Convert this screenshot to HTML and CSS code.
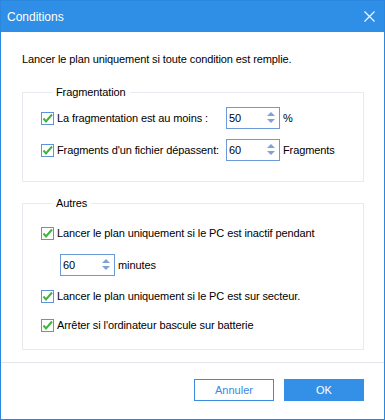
FILE: index.html
```html
<!DOCTYPE html>
<html lang="fr">
<head>
<meta charset="utf-8">
<title>Conditions</title>
<link rel="stylesheet" href="styles.css">
</head>
<body>
<div class="window">
  <div class="titlebar">
    <span class="title">Conditions</span>
    <svg class="close" width="11" height="11" viewBox="0 0 11 11"><path d="M0.5 0.5 L10.5 10.5 M10.5 0.5 L0.5 10.5" stroke="#fff" stroke-width="1.1" fill="none"/></svg>
  </div>
  <div class="content">
    <p class="intro">Lancer le plan uniquement si toute condition est remplie.</p>

    <fieldset class="group g1">
      <legend>Fragmentation</legend>
      <div class="row r1">
        <label class="check wide"><span class="box"><svg width="13" height="13" viewBox="0 0 13 13"><path d="M2.5 6.5 L5 9.5 L11 2.5" stroke="#3fb53c" stroke-width="2" fill="none"/></svg></span>La fragmentation est au moins :</label>
        <div class="spin"><span class="val">50</span><svg width="8" height="12" viewBox="0 0 8 12"><path d="M0 4 L4 0 L8 4 Z M0 7 L8 7 L4 11 Z" fill="#7ea2d6"/></svg></div>
        <span class="unit">%</span>
      </div>
      <div class="row r2">
        <label class="check wide"><span class="box"><svg width="13" height="13" viewBox="0 0 13 13"><path d="M2.5 6.5 L5 9.5 L11 2.5" stroke="#3fb53c" stroke-width="2" fill="none"/></svg></span>Fragments d'un fichier dépassent:</label>
        <div class="spin"><span class="val">60</span><svg width="8" height="12" viewBox="0 0 8 12"><path d="M0 4 L4 0 L8 4 Z M0 7 L8 7 L4 11 Z" fill="#7ea2d6"/></svg></div>
        <span class="unit">Fragments</span>
      </div>
    </fieldset>

    <fieldset class="group g2">
      <legend>Autres</legend>
      <div class="row ra">
        <label class="check"><span class="box"><svg width="13" height="13" viewBox="0 0 13 13"><path d="M2.5 6.5 L5 9.5 L11 2.5" stroke="#3fb53c" stroke-width="2" fill="none"/></svg></span>Lancer le plan uniquement si le PC est inactif pendant</label>
      </div>
      <div class="row rb">
        <div class="spin s3"><span class="val">60</span><svg width="8" height="12" viewBox="0 0 8 12"><path d="M0 4 L4 0 L8 4 Z M0 7 L8 7 L4 11 Z" fill="#7ea2d6"/></svg></div>
        <span class="unit">minutes</span>
      </div>
      <div class="row rc">
        <label class="check"><span class="box"><svg width="13" height="13" viewBox="0 0 13 13"><path d="M2.5 6.5 L5 9.5 L11 2.5" stroke="#3fb53c" stroke-width="2" fill="none"/></svg></span>Lancer le plan uniquement si le PC est sur secteur.</label>
      </div>
      <div class="row rd">
        <label class="check"><span class="box"><svg width="13" height="13" viewBox="0 0 13 13"><path d="M2.5 6.5 L5 9.5 L11 2.5" stroke="#3fb53c" stroke-width="2" fill="none"/></svg></span>Arrêter si l'ordinateur bascule sur batterie</label>
      </div>
    </fieldset>
  </div>
  <div class="footer">
    <button class="btn cancel">Annuler</button>
    <button class="btn ok">OK</button>
  </div>
</div>
</body>
</html>
```

FILE: styles.css
```css
* { box-sizing: border-box; }
html, body { margin: 0; padding: 0; background: #fff; }
body {
  font-family: "Liberation Sans", Arial, sans-serif;
  font-size: 11px;
  letter-spacing: -0.1px;
  color: #000;
}
.window {
  width: 385px;
  height: 420px;
  border: 1px solid #2a86de;
  display: flex;
  flex-direction: column;
  background: #fff;
}
.titlebar {
  height: 31px;
  background: #2f8ee5;
  display: flex;
  align-items: center;
  justify-content: space-between;
  padding: 0 9px 0 6px;
  color: #fff;
  flex: none;
}
.title { font-size: 12px; letter-spacing: 0; }
.close { display: block; margin-top: -1px; }
.content {
  padding: 0 20px 0 21px;
  display: flex;
  flex-direction: column;
}
.intro {
  margin: 20px 0 0;
  line-height: 14px;
}
.group {
  margin: 0;
  border: 1px solid #e7eaee;
  padding: 0 0 0 18px;
  min-width: 0;
}
.group legend {
  padding: 0 4px;
  margin-left: 11px;
  line-height: 14px;
}
.g1 { margin-top: 19px; padding-bottom: 20px; }
.g2 { margin-top: 14px; padding-bottom: 13px; }
.row {
  height: 22px;
  display: flex;
  align-items: center;
}
.r1 { margin-top: 8px; }
.r2 { margin-top: 10px; }
.ra { margin-top: 12px; }
.rb { margin-top: 10px; padding-left: 19px; }
.rc { margin-top: 9px; }
.rd { margin-top: 7px; }
.check {
  display: flex;
  align-items: center;
  gap: 3px;
  white-space: nowrap;
}
.check.wide { width: 185px; }
.box {
  width: 13px;
  height: 13px;
  border: 1px solid #5f92da;
  background: #fff;
  display: flex;
  align-items: center;
  justify-content: center;
  flex: none;
}
.box svg { display: block; margin: -1px; }
.spin {
  width: 54px;
  height: 22px;
  border: 1px solid #6c9ad9;
  display: flex;
  align-items: center;
  justify-content: space-between;
  padding: 0 4px 0 2px;
  flex: none;
}
.spin svg { display: block; margin-top: -1px; }
.spin.s3 { width: 55px; }
.unit { margin-left: 3px; white-space: nowrap; }
.footer {
  margin-top: auto;
  height: 57px;
  border-top: 1px solid #e3e6ea;
  padding: 16px 20px 0 0;
  display: flex;
  justify-content: flex-end;
  align-items: flex-start;
  gap: 10px;
  flex: none;
}
.btn {
  width: 80px;
  height: 22px;
  font-family: "Liberation Sans", Arial, sans-serif;
  font-size: 11px;
  letter-spacing: 0;
  border: 1px solid #3a8ce0;
  background: #fff;
  padding: 0;
  margin: 0;
}
.cancel { color: #3b88e0; }
.ok { background: #3390e6; border-color: #3390e6; color: #fff; }
```
